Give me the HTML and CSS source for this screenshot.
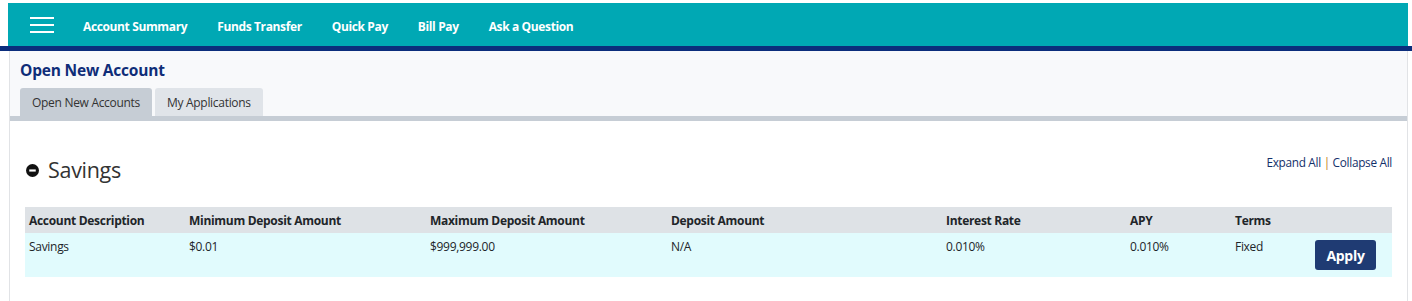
FILE: index.html
```html
<!DOCTYPE html>
<html>
<head>
<meta charset="utf-8">
<link rel="stylesheet" href="styles.css">
</head>
<body>
<header class="topbar">
  <button class="burger" aria-label="Menu"><span></span><span></span><span></span></button>
  <nav class="nav">
    <a>Account Summary</a>
    <a>Funds Transfer</a>
    <a>Quick Pay</a>
    <a>Bill Pay</a>
    <a>Ask a Question</a>
  </nav>
</header>
<div class="rule"></div>
<main class="page">
  <section class="titlebar">
    <h1 class="title">Open New Account</h1>
    <div class="tabs">
      <div class="tab active">Open New Accounts</div>
      <div class="tab">My Applications</div>
    </div>
  </section>
  <section class="content">
    <div class="section-head">
      <h2 class="section-title">
        <svg class="minus" viewBox="0 0 12 12" width="12" height="12"><circle cx="6" cy="6" r="6" fill="#111"/><rect x="3" y="5" width="6" height="2" fill="#fff"/></svg>
        Savings
      </h2>
      <div class="toggles"><a>Expand All</a> <span class="sep">|</span> <a>Collapse All</a></div>
    </div>
    <table class="accounts">
      <colgroup>
        <col class="c1"><col class="c2"><col class="c3"><col class="c4"><col class="c5"><col class="c6"><col class="c7"><col class="c8">
      </colgroup>
      <thead>
        <tr>
          <th>Account Description</th>
          <th>Minimum Deposit Amount</th>
          <th>Maximum Deposit Amount</th>
          <th>Deposit Amount</th>
          <th>Interest Rate</th>
          <th>APY</th>
          <th>Terms</th>
          <th></th>
        </tr>
      </thead>
      <tbody>
        <tr>
          <td>Savings</td>
          <td>$0.01</td>
          <td>$999,999.00</td>
          <td>N/A</td>
          <td>0.010%</td>
          <td>0.010%</td>
          <td>Fixed</td>
          <td><button class="apply">Apply</button></td>
        </tr>
      </tbody>
    </table>
  </section>
</main>
</body>
</html>
```
FILE: styles.css
```css
* { box-sizing: border-box; }
html, body { margin: 0; padding: 0; background: #fff; }
body {
  font-family: "Open Sans", "Noto Sans", sans-serif;
  color: #212529;
  height: 301px;
  overflow: hidden;
}
.topbar {
  margin: 3px 4px 0 8px;
  height: 43px;
  background: #00a8b4;
  display: flex;
  align-items: center;
  padding-top: 3px;
}
.burger {
  border: 0;
  background: transparent;
  padding: 0;
  margin-left: 22px;
  margin-top: -3px;
  width: 24px;
  height: 16px;
  display: flex;
  flex-direction: column;
  justify-content: space-between;
}
.burger span {
  display: block;
  height: 2px;
  background: #fff;
  width: 24px;
}
.nav {
  display: flex;
  gap: 30px;
  margin-left: 29px;
}
.nav a {
  color: #fff;
  font-weight: 700;
  font-size: 12px;
  letter-spacing: -0.37px;
}
.rule {
  height: 5px;
  background: #0b2d7c;
}
.page {
  margin: 0 4px 0 9px;
  border-left: 1px solid #e1e3e6;
  border-right: 1px solid #e1e3e6;
  min-height: 251px;
}
.titlebar {
  background: #f8f9fb;
  border-bottom: 5px solid #c6cdd5;
  padding: 9px 0 0 10px;
}
.title {
  margin: 0;
  font-size: 15.5px;
  font-weight: 700;
  color: #0f2d78;
  line-height: 20px;
  letter-spacing: -0.2px;
}
.tabs {
  display: flex;
  gap: 3px;
  margin-top: 8px;
}
.tab {
  height: 28px;
  padding: 0 12px;
  display: flex;
  align-items: center;
  font-size: 12px;
  color: #333;
  background: #e0e4e9;
  border-radius: 3px 3px 0 0;
  letter-spacing: -0.3px;
}
.tab.active { background: #c6cdd5; }
.content {
  padding: 34px 15px 0 15px;
}
.section-head {
  display: flex;
  justify-content: space-between;
  align-items: flex-start;
}
.section-title {
  margin: 0 0 0 1px;
  display: flex;
  align-items: center;
  gap: 9px;
  font-size: 21.5px;
  font-weight: 400;
  color: #333;
  line-height: 30px;
  letter-spacing: -0.3px;
}
.minus { display: block; width: 13px; height: 13px; }
.toggles {
  font-size: 11.8px;
  color: #13306a;
  margin-top: -1px;
  letter-spacing: -0.3px;
}
.toggles .sep { color: #c07a1a; }
.accounts {
  margin-top: 22px;
  width: 1367px;
  border-collapse: collapse;
  table-layout: fixed;
  font-size: 12px;
  letter-spacing: -0.3px;
}
.c1 { width: 160px; }
.c2 { width: 241px; }
.c3 { width: 241px; }
.c4 { width: 275px; }
.c5 { width: 184px; }
.c6 { width: 105px; }
.c7 { width: 80px; }
.c8 { width: 81px; }
.accounts thead tr { background: #dee2e6; }
.accounts th {
  text-align: left;
  font-weight: 700;
  color: #212529;
  height: 26px;
  padding: 1px 4px 0 4px;
}
.accounts tbody tr { background: #e1fbfd; }
.accounts td {
  vertical-align: top;
  padding: 5px 4px 0 4px;
  height: 44px;
  color: #212529;
}
.accounts td:last-child { padding-top: 7px; }
.apply {
  border: 0;
  background: #1f3b73;
  color: #fff;
  font-family: "Open Sans", "Noto Sans", sans-serif;
  font-weight: 700;
  font-size: 14px;
  width: 61px;
  height: 30px;
  border-radius: 3px;
  padding: 0;
  letter-spacing: -0.3px;
}
```
